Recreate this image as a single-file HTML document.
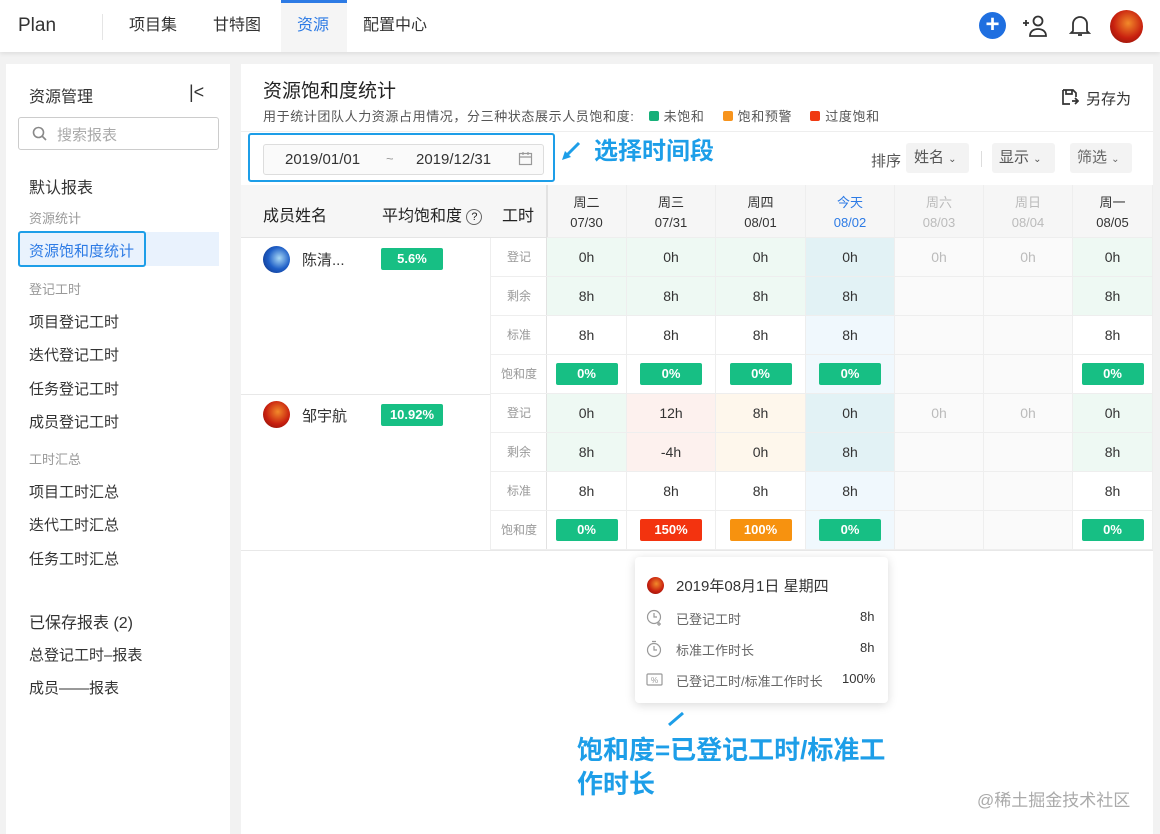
<!DOCTYPE html>
<html><head><meta charset="utf-8"><style>
*{box-sizing:border-box;margin:0;padding:0}
body{width:1160px;height:830px;background:#f2f2f2;font-family:"Liberation Sans","Noto Sans CJK SC",sans-serif;color:#333;position:relative;overflow:hidden}
.a{position:absolute}
.top{left:0;top:0;width:1160px;height:52px;background:#fff;box-shadow:0 2px 4px rgba(0,0,0,.08)}
.nav{top:0;height:52px;line-height:52px;font-size:16px;color:#333}
.side{left:6px;top:64px;width:224px;height:770px;background:#fff}
.main{left:241px;top:64px;width:912px;height:770px;background:#fff}
.si{left:29px;font-size:15px;color:#333}
.sg{left:29px;font-size:13px;color:#999}
.c{position:absolute;text-align:center;font-size:14px;color:#333;border-right:1px solid #eee;border-bottom:1px solid #eee}
.lb{position:absolute;left:490px;width:57px;text-align:center;font-size:12px;color:#999;border-bottom:1px solid #eee;border-left:1px solid #eee;height:39px;line-height:39px}
.b{display:inline-block;width:62px;height:22px;line-height:22px;border-radius:2px;color:#fff;font-size:13px;font-weight:bold;background:#17bf84;margin-top:8px}
.bl{color:#2d7be5}
.g{color:#bbb}
</style></head><body>
<div class="a top"></div>
<div class="a nav" style="left:18px;font-size:19px;color:#333">Plan</div>
<div class="a" style="left:102px;top:14px;width:1px;height:26px;background:#e5e5e5"></div>
<div class="a nav" style="left:129px">项目集</div>
<div class="a nav" style="left:213px">甘特图</div>
<div class="a" style="left:281px;top:0;width:66px;height:52px;background:#f5f5f5;border-top:3px solid #2d7be5"></div>
<div class="a nav bl" style="left:297px">资源</div>
<div class="a nav" style="left:363px">配置中心</div>
<div class="a" style="left:979px;top:12px;width:27px;height:27px;border-radius:50%;background:#1f6fe0;color:#fff;text-align:center;line-height:26px;font-size:24px;font-weight:bold">+</div>
<svg class="a" style="left:1022px;top:14px" width="28" height="24" viewBox="0 0 28 24" fill="none" stroke="#333" stroke-width="1.8"><path d="M1 9h6M4 6v6"/><circle cx="16" cy="7" r="4.5"/><path d="M8 22c0-5 4-7 8-7s8 2 8 7z"/></svg>
<svg class="a" style="left:1069px;top:14px" width="22" height="24" viewBox="0 0 22 24" fill="none" stroke="#333" stroke-width="1.8"><path d="M4 17V10a7 7 0 0 1 14 0v7l2 2H2z"/><path d="M9 21h4"/></svg>
<div class="a" style="left:1110px;top:10px;width:33px;height:33px;border-radius:50%;background:radial-gradient(circle at 55% 40%,#f28a2a,#c8200f 55%,#7a0f08)"></div>

<div class="a side"></div>
<div class="a si" style="left:29px;top:83px;font-size:16px">资源管理</div>
<div class="a" style="left:189px;top:82px;font-size:18px;color:#333">|&lt;</div>
<div class="a" style="left:18px;top:117px;width:201px;height:33px;border:1px solid #ccc;border-radius:3px"></div>
<svg class="a" style="left:32px;top:126px" width="15" height="15" fill="none" stroke="#888" stroke-width="1.6"><circle cx="6.5" cy="6.5" r="5"/><path d="M10 10l4 4"/></svg>
<div class="a" style="left:57px;top:124px;font-size:15px;color:#aaa">搜索报表</div>
<div class="a si" style="top:174px;font-size:16px">默认报表</div>
<div class="a sg" style="top:208px">资源统计</div>
<div class="a" style="left:18px;top:232px;width:201px;height:34px;background:#e9f2fd"></div>
<div class="a" style="left:18px;top:231px;width:128px;height:36px;border:2px solid #1d9ee8;border-radius:3px"></div>
<div class="a si bl" style="top:240px">资源饱和度统计</div>
<div class="a sg" style="top:279px">登记工时</div>
<div class="a si" style="top:311px">项目登记工时</div>
<div class="a si" style="top:344px">迭代登记工时</div>
<div class="a si" style="top:378px">任务登记工时</div>
<div class="a si" style="top:411px">成员登记工时</div>
<div class="a sg" style="top:449px">工时汇总</div>
<div class="a si" style="top:481px">项目工时汇总</div>
<div class="a si" style="top:514px">迭代工时汇总</div>
<div class="a si" style="top:548px">任务工时汇总</div>
<div class="a si" style="top:609px;font-size:16px">已保存报表 (2)</div>
<div class="a si" style="top:644px">总登记工时–报表</div>
<div class="a si" style="top:677px">成员——报表</div>

<div class="a main"></div>
<div class="a" style="left:263px;top:76px;font-size:19px;color:#222">资源饱和度统计</div>
<div class="a" style="left:263px;top:106px;font-size:13px;color:#555;letter-spacing:0.6px;white-space:nowrap">用于统计团队人力资源占用情况，分三种状态展示人员饱和度: <span style="display:inline-block;width:10px;height:10px;background:#17b079;border-radius:2px;margin:0 5px 0 10px"></span>未饱和 <span style="display:inline-block;width:10px;height:10px;background:#f7941d;border-radius:2px;margin:0 5px 0 14px"></span>饱和预警 <span style="display:inline-block;width:10px;height:10px;background:#f03a12;border-radius:2px;margin:0 5px 0 14px"></span>过度饱和</div>
<svg class="a" style="left:1061px;top:88px" width="18" height="18" fill="none" stroke="#333" stroke-width="1.7"><path d="M2 2h10l3 3v4M2 2v14h7M5 2v4h6V2M11 13h6M14 10l3 3-3 3"/></svg>
<div class="a" style="left:1086px;top:88px;font-size:15px;color:#333">另存为</div>
<div class="a" style="left:241px;top:131px;width:912px;height:1px;background:#eee"></div>
<div class="a" style="left:248px;top:133px;width:307px;height:49px;border:2px solid #1d9ee8;border-radius:3px"></div>
<div class="a" style="left:263px;top:144px;width:281px;height:31px;border:1px solid #ddd;border-radius:3px;background:#fafafa"></div>
<div class="a" style="left:285px;top:151px;font-size:15px;color:#333">2019/01/01</div>
<div class="a" style="left:386px;top:151px;font-size:13px;color:#999">~</div>
<div class="a" style="left:416px;top:151px;font-size:15px;color:#333">2019/12/31</div>
<svg class="a" style="left:518px;top:151px" width="15" height="15" fill="none" stroke="#999" stroke-width="1.2"><rect x="1.5" y="2.5" width="12" height="11"/><path d="M1.5 6h12M5 1v3M10 1v3"/></svg>
<svg class="a" style="left:560px;top:140px" width="22" height="22"><path d="M19 3L5 17" stroke="#1d9ee8" stroke-width="3"/><path d="M2 20l3-9 6 6z" fill="#1d9ee8"/></svg>
<div class="a" style="left:594px;top:131px;font-size:24px;font-weight:bold;color:#1d9ee8;text-shadow:0 0 3px #fff,0 0 3px #fff">选择时间段</div>
<div class="a" style="left:871px;top:150px;font-size:15px;color:#555">排序</div>
<div class="a" style="left:906px;top:143px;width:63px;height:30px;background:#f3f3f3;border-radius:3px;font-size:15px;color:#555;line-height:30px;padding-left:8px">姓名 <span style="font-size:10px">⌄</span></div>
<div class="a" style="left:981px;top:151px;width:1px;height:16px;background:#ddd"></div>
<div class="a" style="left:992px;top:143px;width:63px;height:30px;background:#f3f3f3;border-radius:3px;font-size:15px;color:#555;line-height:30px;padding-left:7px">显示 <span style="font-size:10px">⌄</span></div>
<div class="a" style="left:1070px;top:143px;width:62px;height:30px;background:#f3f3f3;border-radius:3px;font-size:15px;color:#666;line-height:30px;padding-left:7px">筛选 <span style="font-size:10px">⌄</span></div>

<div class="a" style="left:241px;top:185px;width:912px;height:53px;background:#f6f6f6;border-bottom:1px solid #e5e5e5"></div>
<div class="a" style="left:263px;top:202px;font-size:16px;color:#222">成员姓名</div>
<div class="a" style="left:382px;top:202px;font-size:16px;color:#222">平均饱和度 <span style="display:inline-block;width:16px;height:16px;border:1.5px solid #666;border-radius:50%;font-size:11px;text-align:center;line-height:14px;vertical-align:1px">?</span></div>
<div class="a" style="left:502px;top:202px;font-size:16px;color:#222">工时</div>
<div class="a" style="left:546px;top:185px;width:2px;height:365px;background:#e2e2e2"></div>
<div id="grid"></div>
<div class="a" style="left:241px;top:394px;width:249px;height:1px;background:#e8e8e8"></div>
<div class="a" style="left:241px;top:550px;width:912px;height:1px;background:#e8e8e8"></div>

<div class="a" style="left:263px;top:246px;width:27px;height:27px;border-radius:50%;background:radial-gradient(circle at 60% 45%,#a8d8f5,#1f5fc7 50%,#0a2a7a)"></div>
<div class="a" style="left:302px;top:249px;font-size:15px">陈清...</div>
<div class="a" style="left:381px;top:248px;width:62px;height:22px;background:#17bf84;border-radius:2px;color:#fff;font-weight:bold;font-size:13px;text-align:center;line-height:22px">5.6%</div>
<div class="a" style="left:263px;top:401px;width:27px;height:27px;border-radius:50%;background:radial-gradient(circle at 55% 40%,#f28a2a,#c8200f 55%,#7a0f08)"></div>
<div class="a" style="left:302px;top:405px;font-size:15px">邹宇航</div>
<div class="a" style="left:381px;top:404px;width:62px;height:22px;background:#17bf84;border-radius:2px;color:#fff;font-weight:bold;font-size:13px;text-align:center;line-height:22px">10.92%</div>

<div class="a" style="left:635px;top:557px;width:253px;height:146px;background:#fff;border-radius:4px;box-shadow:0 2px 10px rgba(0,0,0,.15)"></div>
<div class="a" style="left:647px;top:577px;width:17px;height:17px;border-radius:50%;background:radial-gradient(circle at 55% 40%,#f28a2a,#c8200f 55%,#7a0f08)"></div>
<div class="a" style="left:676px;top:575px;font-size:15px;color:#333">2019年08月1日 星期四</div>
<svg class="a" style="left:646px;top:609px" width="18" height="18" fill="none" stroke="#999" stroke-width="1.2"><circle cx="8" cy="8" r="6.5"/><path d="M8 4v4h3M13 13v4M11 15h4"/></svg>
<div class="a" style="left:676px;top:609px;font-size:13px;color:#666">已登记工时</div>
<div class="a" style="left:860px;top:609px;font-size:13px;color:#333">8h</div>
<svg class="a" style="left:646px;top:640px" width="18" height="18" fill="none" stroke="#999" stroke-width="1.2"><circle cx="8" cy="10" r="6.5"/><path d="M8 6v4h3M6 1.5h4"/></svg>
<div class="a" style="left:676px;top:640px;font-size:13px;color:#666">标准工作时长</div>
<div class="a" style="left:860px;top:640px;font-size:13px;color:#333">8h</div>
<svg class="a" style="left:646px;top:672px" width="18" height="16" fill="none" stroke="#999" stroke-width="1.2"><rect x="1" y="2" width="15" height="11" rx="1"/><text x="5" y="11" font-size="8" fill="#999" stroke="none">%</text></svg>
<div class="a" style="left:676px;top:671px;font-size:13px;color:#666">已登记工时/标准工作时长</div>
<div class="a" style="left:842px;top:671px;font-size:13px;color:#333">100%</div>

<svg class="a" style="left:664px;top:709px" width="24" height="18"><path d="M5 16L19 4" stroke="#1d9ee8" stroke-width="3"/></svg>
<div class="a" style="left:577px;top:733px;font-size:26px;font-weight:bold;color:#1d9ee8;line-height:34px;width:320px;text-shadow:0 0 3px #fff,0 0 3px #fff">饱和度=已登记工时/标准工作时长</div>
<div class="a" style="left:977px;top:786px;font-size:17px;color:#aaa">@稀土掘金技术社区</div>

<script>
var X=[547,627,716,806,895,984,1073,1153];
var H=[["周二","07/30",0],["周三","07/31",0],["周四","08/01",0],["今天","08/02",1],["周六","08/03",2],["周日","08/04",2],["周一","08/05",0]];
var L=["登记","剩余","标准","饱和度"];
var D=[[["0h","0h","0h","0h","0h","0h","0h"],["8h","8h","8h","8h","","","8h"],["8h","8h","8h","8h","","","8h"],["0%","0%","0%","0%","","","0%"]],
[["0h","12h","8h","0h","0h","0h","0h"],["8h","-4h","0h","8h","","","8h"],["8h","8h","8h","8h","","","8h"],["0%","150%","100%","0%","","","0%"]]];
var s="";
for(var i=0;i<7;i++){var w=X[i+1]-X[i];var col=H[i][2]==1?"#2d7be5":H[i][2]==2?"#bbb":"#333";
s+='<div class="c" style="left:'+X[i]+'px;top:185px;width:'+w+'px;height:53px;padding-top:8px;line-height:20px;font-size:13px;color:'+col+'">'+H[i][0]+'<br>'+H[i][1]+'</div>';}
for(var m=0;m<2;m++)for(var r=0;r<4;r++){var y=238+m*156+r*39;
s+='<div class="lb" style="top:'+y+'px">'+L[r]+'</div>';
for(var i=0;i<7;i++){var w=X[i+1]-X[i];var v=D[m][r][i];var bg="#fff";
var wk=H[i][2]==2;
if(wk)bg="#fafafa";else if(H[i][2]==1)bg=r<2?"#e2f2f5":"#f0f8fd";else if(r<2){bg="#eef9f3";if(m==1&&i==1)bg="#fdf1ee";if(m==1&&i==2)bg="#fef7ec";}
var inner=v;
if(r==3&&v){var bc=v=="150%"?"#f3330f":v=="100%"?"#f7920f":"#17bf84";inner='<span class="b" style="background:'+bc+'">'+v+'</span>';}
s+='<div class="c" style="left:'+X[i]+'px;top:'+y+'px;width:'+w+'px;height:39px;'+(r==3?'':'line-height:39px;')+'background:'+bg+';color:'+(wk?'#bbb':'#333')+'">'+inner+'</div>';}}
document.getElementById('grid').innerHTML=s;
</script>
</body></html>
